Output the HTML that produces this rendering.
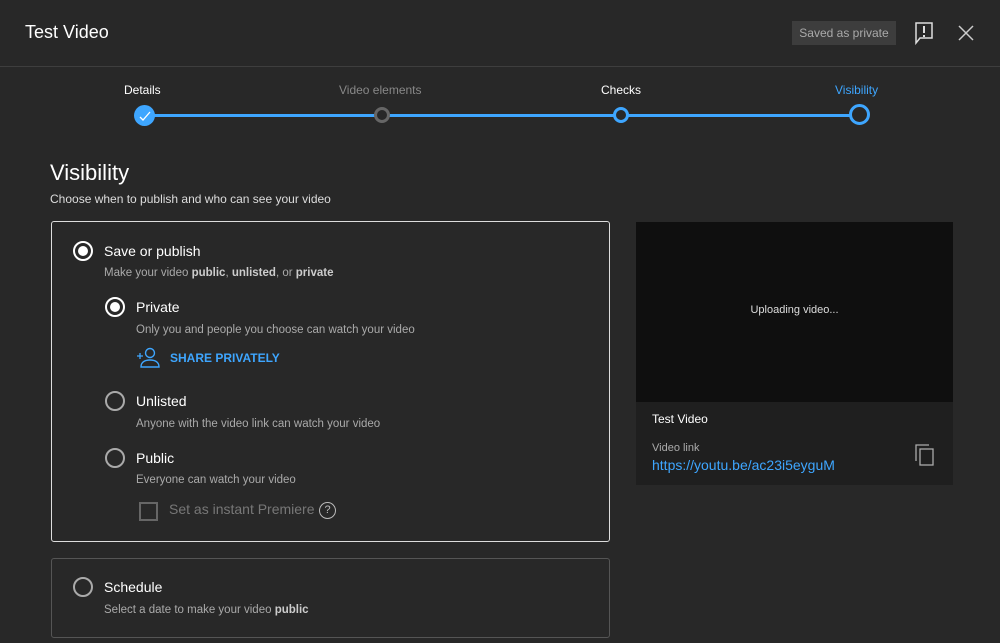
<!DOCTYPE html>
<html><head><meta charset="utf-8"><style>
body{margin:0;width:1000px;height:643px;background:#282828;font-family:"Liberation Sans",sans-serif;color:#fff;position:relative;overflow:hidden}
.a{position:absolute}
.sub{color:#aaa;font-size:11.5px}
.radio{position:absolute;width:16px;height:16px;border:2px solid #aaa;border-radius:50%;box-sizing:content-box}
.radio.on{border-color:#fff}
.radio.on::after{content:"";position:absolute;left:3px;top:3px;width:10px;height:10px;border-radius:50%;background:#fff}
.lbl{position:absolute;font-size:14px;color:#fff}
</style></head><body>
<div class="a" style="left:25px;top:22px;font-size:18px">Test Video</div>
<div class="a" style="left:792px;top:21px;width:104px;height:24px;background:#3d3d3d;color:#aaa;font-size:12px;line-height:24px;text-align:center">Saved as private</div>
<svg class="a" style="left:913px;top:21px" width="22" height="24" viewBox="0 0 22 24"><path d="M3 2h16v15H7l-4 5z" fill="none" stroke="#ddd" stroke-width="1.5"/><path d="M11 5v7M11 14v2" stroke="#ddd" stroke-width="2"/></svg>
<svg class="a" style="left:957px;top:24px" width="18" height="18"><path d="M2 2L16 16M16 2L2 16" stroke="#ccc" stroke-width="1.5"/></svg>
<div class="a" style="left:0;top:66px;width:1000px;height:1px;background:#3e3e3e"></div>
<div class="a" style="left:124px;top:83px;font-size:12px">Details</div>
<div class="a" style="left:339px;top:83px;font-size:12px;color:#888">Video elements</div>
<div class="a" style="left:601px;top:83px;font-size:12px">Checks</div>
<div class="a" style="left:835px;top:83px;font-size:12px;color:#3ea6ff">Visibility</div>
<div class="a" style="left:145px;top:114px;width:715px;height:3px;background:#3ea6ff"></div>
<div class="a" style="left:134px;top:105px;width:21px;height:21px;border-radius:50%;background:#3ea6ff"></div>
<svg class="a" style="left:138px;top:109px" width="14" height="14"><path d="M2 8l3 3 7-8" fill="none" stroke="#fff" stroke-width="1.3"/></svg>
<div class="a" style="left:374px;top:107px;width:10px;height:10px;border-radius:50%;border:3px solid #666;background:#282828"></div>
<div class="a" style="left:613px;top:107px;width:10px;height:10px;border-radius:50%;border:3px solid #3ea6ff;background:#282828"></div>
<div class="a" style="left:849px;top:104px;width:15px;height:15px;border-radius:50%;border:3px solid #3ea6ff;background:#282828"></div>
<div class="a" style="left:50px;top:160px;font-size:22px">Visibility</div>
<div class="a" style="left:50px;top:192px;font-size:12px;color:#ddd">Choose when to publish and who can see your video</div>
<div class="a" style="left:51px;top:221px;width:557px;height:319px;border:1px solid #ddd;border-radius:3px"></div>
<div class="radio on" style="left:73px;top:241px"></div>
<div class="lbl" style="left:104px;top:243px">Save or publish</div>
<div class="a sub" style="left:104px;top:267px">Make your video <b style="color:#ccc">public</b>, <b style="color:#ccc">unlisted</b>, or <b style="color:#ccc">private</b></div>
<div class="radio on" style="left:105px;top:297px"></div>
<div class="lbl" style="left:136px;top:299px">Private</div>
<div class="a sub" style="left:136px;top:324px">Only you and people you choose can watch your video</div>
<svg class="a" style="left:136px;top:347px" width="24" height="22" viewBox="0 0 24 22"><circle cx="14" cy="6" r="4.5" fill="none" stroke="#3ea6ff" stroke-width="1.4"/><path d="M5 20c0-5 4-7 9-7s9 2 9 7z" fill="none" stroke="#3ea6ff" stroke-width="1.4"/><path d="M1 9h6M4 6v6" stroke="#3ea6ff" stroke-width="1.3"/></svg>
<div class="a" style="left:170px;top:351px;font-size:12px;font-weight:bold;color:#3ea6ff">SHARE PRIVATELY</div>
<div class="radio" style="left:105px;top:391px"></div>
<div class="lbl" style="left:136px;top:393px">Unlisted</div>
<div class="a sub" style="left:136px;top:418px">Anyone with the video link can watch your video</div>
<div class="radio" style="left:105px;top:448px"></div>
<div class="lbl" style="left:136px;top:450px">Public</div>
<div class="a sub" style="left:136px;top:474px">Everyone can watch your video</div>
<div class="a" style="left:139px;top:502px;width:15px;height:15px;border:2px solid #666"></div>
<div class="a" style="left:169px;top:501px;font-size:14px;color:#777">Set as instant Premiere</div>
<div class="a" style="left:319px;top:502px;width:15px;height:15px;border:1.5px solid #bbb;border-radius:50%;font-size:11px;text-align:center;line-height:15px;color:#bbb">?</div>
<div class="a" style="left:51px;top:558px;width:557px;height:78px;border:1px solid #555;border-radius:3px"></div>
<div class="radio" style="left:73px;top:577px"></div>
<div class="lbl" style="left:104px;top:579px">Schedule</div>
<div class="a sub" style="left:104px;top:604px">Select a date to make your video <b style="color:#ccc">public</b></div>
<div class="a" style="left:636px;top:222px;width:317px;height:180px;background:#0f0f0f"></div>
<div class="a" style="left:636px;top:304px;width:317px;text-align:center;font-size:11px;color:#ddd">Uploading video...</div>
<div class="a" style="left:636px;top:402px;width:317px;height:83px;background:#1f1f1f"></div>
<div class="a" style="left:652px;top:412px;font-size:12px">Test Video</div>
<div class="a" style="left:652px;top:442px;font-size:11px;color:#aaa">Video link</div>
<div class="a" style="left:652px;top:457px;font-size:14px;color:#3ea6ff">https://youtu.be/ac23i5eyguM</div>
<svg class="a" style="left:914px;top:443px" width="22" height="24"><path d="M2 18V2h13" fill="none" stroke="#aaa" stroke-width="1.3"/><rect x="6" y="6" width="13" height="16" fill="none" stroke="#aaa" stroke-width="1.3"/></svg>
</body></html>
